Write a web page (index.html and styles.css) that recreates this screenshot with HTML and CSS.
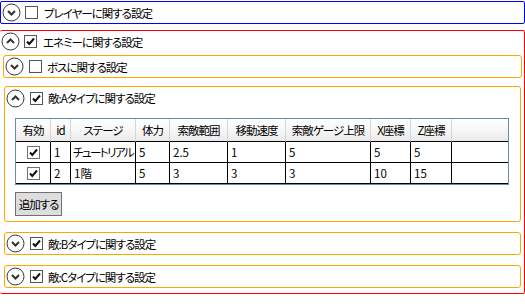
FILE: index.html
```html
<!DOCTYPE html>
<html lang="ja">
<head>
  <meta charset="UTF-8">
  <title>設定</title>
  <link rel="stylesheet" href="styles.css">
</head>
<body>

  <!-- プレイヤー -->
  <div class="group group-player">
    <div class="head">
      <svg class="toggle" viewBox="0 0 19 19"><circle cx="9.5" cy="9.5" r="8.5"/><path d="M6 8 L9.5 11.5 L13 8"/></svg>
      <svg class="check" viewBox="0 0 13 13"><rect x="0.5" y="0.5" width="12" height="12"/></svg>
      <span class="label">プレイヤーに関する設定</span>
    </div>
  </div>

  <!-- エネミー -->
  <div class="group group-enemy">
    <div class="head">
      <svg class="toggle" viewBox="0 0 19 19"><circle cx="9.5" cy="9.5" r="8.5"/><path d="M6 11 L9.5 7.5 L13 11"/></svg>
      <svg class="check" viewBox="0 0 13 13"><rect x="0.5" y="0.5" width="12" height="12"/><path d="M3 6.5 L5.3 9 L10 3.5"/></svg>
      <span class="label">エネミーに関する設定</span>
    </div>

    <div class="sub sub-boss">
      <div class="head">
        <svg class="toggle" viewBox="0 0 19 19"><circle cx="9.5" cy="9.5" r="8.5"/><path d="M6 8 L9.5 11.5 L13 8"/></svg>
        <svg class="check" viewBox="0 0 13 13"><rect x="0.5" y="0.5" width="12" height="12"/></svg>
        <span class="label">ボスに関する設定</span>
      </div>
    </div>

    <div class="sub sub-type open">
      <div class="head">
        <svg class="toggle" viewBox="0 0 19 19"><circle cx="9.5" cy="9.5" r="8.5"/><path d="M6 11 L9.5 7.5 L13 11"/></svg>
        <svg class="check" viewBox="0 0 13 13"><rect x="0.5" y="0.5" width="12" height="12"/><path d="M3 6.5 L5.3 9 L10 3.5"/></svg>
        <span class="label">敵:Aタイプに関する設定</span>
      </div>

      <div class="grid">
        <div class="hd">有効</div>
        <div class="hd">id</div>
        <div class="hd">ステージ</div>
        <div class="hd">体力</div>
        <div class="hd">索敵範囲</div>
        <div class="hd">移動速度</div>
        <div class="hd">索敵ゲージ上限</div>
        <div class="hd">X座標</div>
        <div class="hd">Z座標</div>
        <div class="hd fill"></div>

        <div class="cell center"><svg class="check small" viewBox="0 0 13 13"><rect x="0.5" y="0.5" width="12" height="12"/><path d="M3 6.5 L5.3 9 L10 3.5"/></svg></div>
        <div class="cell">1</div>
        <div class="cell kana">チュートリアル</div>
        <div class="cell">5</div>
        <div class="cell">2.5</div>
        <div class="cell">1</div>
        <div class="cell">5</div>
        <div class="cell">5</div>
        <div class="cell">5</div>
        <div class="cell fill"></div>

        <div class="cell center"><svg class="check small" viewBox="0 0 13 13"><rect x="0.5" y="0.5" width="12" height="12"/><path d="M3 6.5 L5.3 9 L10 3.5"/></svg></div>
        <div class="cell">2</div>
        <div class="cell">1階</div>
        <div class="cell">5</div>
        <div class="cell">3</div>
        <div class="cell">3</div>
        <div class="cell">3</div>
        <div class="cell">10</div>
        <div class="cell">15</div>
        <div class="cell fill"></div>
      </div>

      <button class="add">追加する</button>
    </div>

    <div class="sub sub-type">
      <div class="head">
        <svg class="toggle" viewBox="0 0 19 19"><circle cx="9.5" cy="9.5" r="8.5"/><path d="M6 8 L9.5 11.5 L13 8"/></svg>
        <svg class="check" viewBox="0 0 13 13"><rect x="0.5" y="0.5" width="12" height="12"/><path d="M3 6.5 L5.3 9 L10 3.5"/></svg>
        <span class="label">敵:Bタイプに関する設定</span>
      </div>
    </div>

    <div class="sub sub-type">
      <div class="head">
        <svg class="toggle" viewBox="0 0 19 19"><circle cx="9.5" cy="9.5" r="8.5"/><path d="M6 8 L9.5 11.5 L13 8"/></svg>
        <svg class="check" viewBox="0 0 13 13"><rect x="0.5" y="0.5" width="12" height="12"/><path d="M3 6.5 L5.3 9 L10 3.5"/></svg>
        <span class="label">敵:Cタイプに関する設定</span>
      </div>
    </div>
  </div>

</body>
</html>
```

FILE: styles.css
```css
* {
  margin: 0;
  padding: 0;
  box-sizing: border-box;
}

body {
  font-family: "Noto Sans CJK JP", sans-serif;
  font-size: 11.5px;
  letter-spacing: -1px;
  font-feature-settings: "palt";
  color: #000;
  background: #fff;
  padding-top: 1px;
  width: 525px;
}

/* outer expanders */
.group-player {
  border: 1px solid #0000ff;
  border-radius: 2px;
  height: 23px;
}

.group-enemy {
  border: 1px solid #ff0000;
  border-left: none;
  border-radius: 2px;
  margin-top: 6px;
  padding-bottom: 5px;
}

.head {
  display: flex;
  align-items: center;
  height: 21px;
  line-height: 16px;
  padding-left: 1px;
}

.toggle {
  width: 19px;
  height: 19px;
  flex: none;
}

.toggle circle {
  fill: #fff;
  stroke: #333;
  stroke-width: 1;
}

.toggle path {
  fill: none;
  stroke: #333;
  stroke-width: 2;
}

.check {
  width: 13px;
  height: 13px;
  flex: none;
  margin-left: 4px;
  margin-right: 6px;
}

.check rect {
  fill: #fff;
  stroke: #555;
}

.check path {
  fill: none;
  stroke: #111;
  stroke-width: 2;
}

.label {
  white-space: nowrap;
}

/* inner expanders */
.sub {
  border: 1px solid #ffa500;
  border-radius: 3px;
}

.sub .check {
  margin-left: 5px;
  margin-right: 5px;
}

.sub-boss {
  margin: 3px 2px 0 3px;
}

.sub-type {
  margin: 10px 3px 0 4px;
}

.sub-type.open {
  margin-top: 8px;
  padding-bottom: 5px;
}

.sub-type.open .head {
  height: 22px;
}

/* data grid */
.grid {
  display: grid;
  grid-template-columns: 35px 20px 65px 34px 58px 58px 85px 40px 41px 1fr;
  border: 1px solid #688caf;
  margin: 9px 11px 0 10px;
}

.hd {
  height: 23px;
  line-height: 22px;
  text-align: center;
  white-space: nowrap;
  background: linear-gradient(#ffffff, #f7f7f7 50%, #e9e9e9);
  border-right: 1px solid #d5d5d5;
  border-bottom: 1px solid #000;
}

.cell {
  height: 21px;
  line-height: 20px;
  padding-left: 3px;
  letter-spacing: 0;
  white-space: nowrap;
  overflow: hidden;
  border-right: 1px solid #000;
  border-bottom: 1px solid #000;
}

.cell.kana {
  padding-left: 2px;
  letter-spacing: -1.6px;
}

.hd.fill,
.cell.fill {
  border-right: none;
}

.cell.center {
  display: flex;
  align-items: center;
  justify-content: center;
  padding-left: 0;
}

.check.small {
  margin: 0;
}

.check.small rect {
  stroke: #707070;
}

.add {
  display: block;
  margin: 7px 0 0 10px;
  width: 47px;
  height: 24px;
  padding: 0;
  white-space: nowrap;
  font: inherit;
  letter-spacing: inherit;
  font-feature-settings: "palt";
  background: #dddddd;
  border: 1px solid #707070;
  color: #000;
}
```
